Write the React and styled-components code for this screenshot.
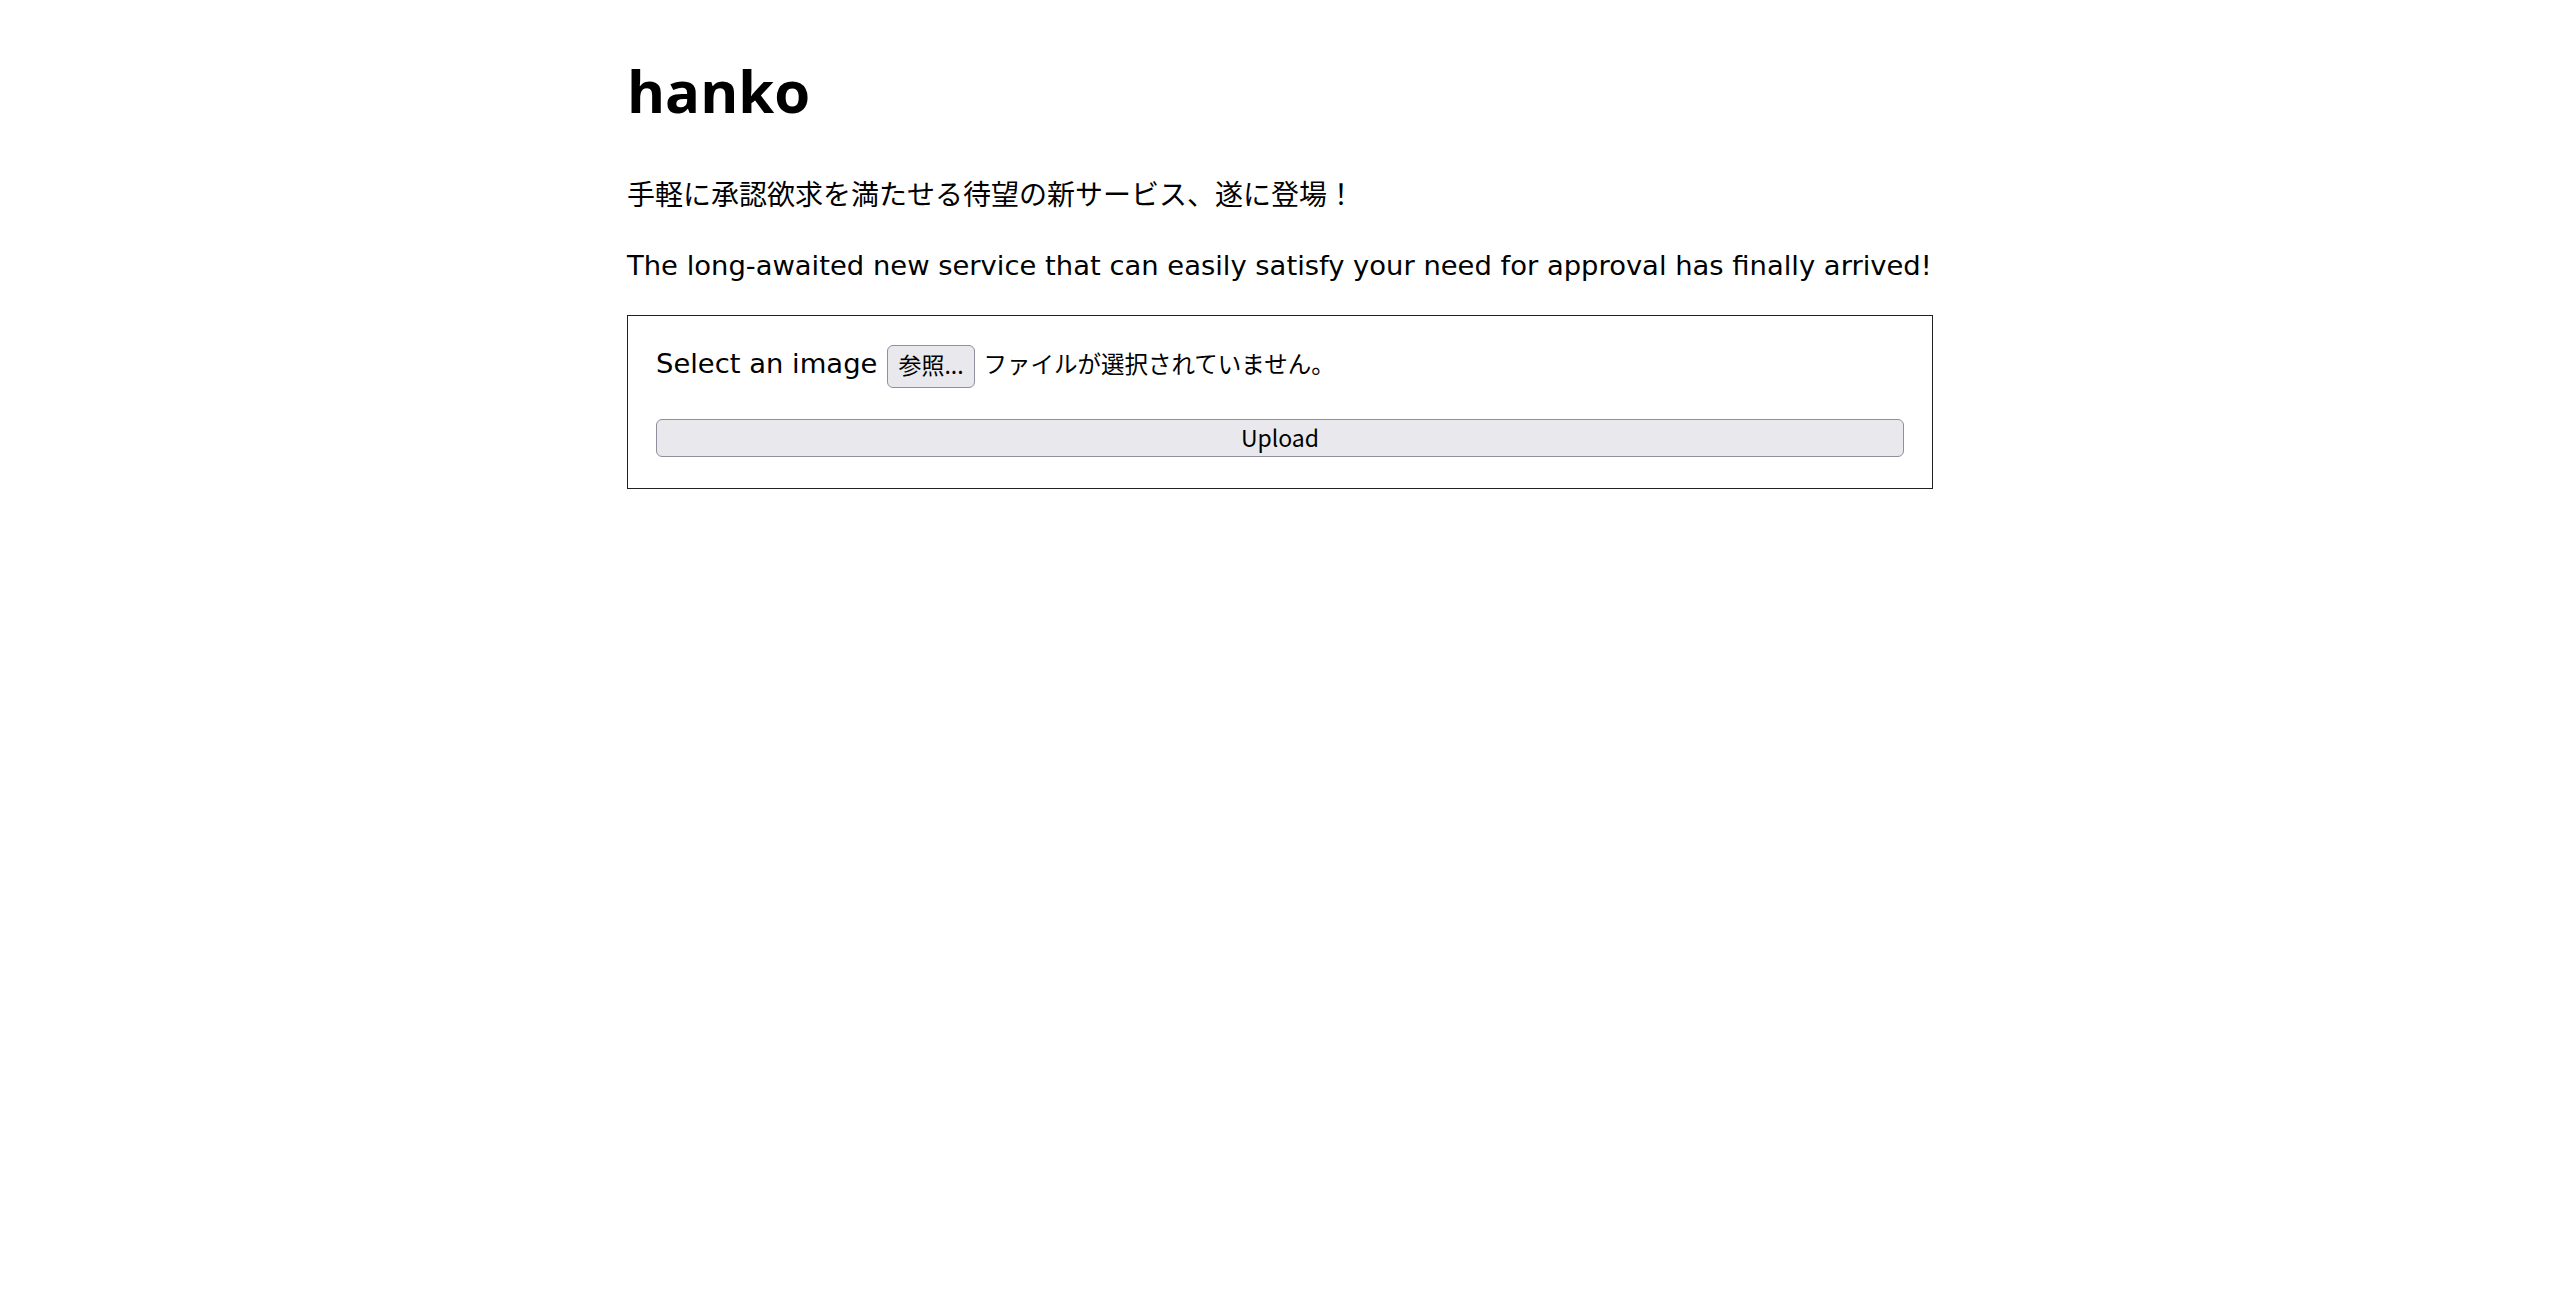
import React from 'react'
import styled, { createGlobalStyle } from 'styled-components'

const GlobalStyle = createGlobalStyle`
  html, body {
    margin: 0;
    padding: 0;
    background: #fff;
  }
  body {
    font-family: "DejaVu Sans", "Noto Sans CJK JP", sans-serif;
    color: #000;
  }
`

const Page = styled.main`
  box-sizing: border-box;
  width: 1306px;
  margin: 0 auto;
  padding-top: 62px;
`

const Title = styled.h1`
  margin: 0;
  font-family: "Open Sans", "Noto Sans CJK JP", sans-serif;
  font-weight: 700;
  font-size: 58px;
  line-height: 57px;
`

const Lead = styled.p`
  margin: ${(p) => p.$top}px 0 0;
  font-family: ${(p) => (p.$jp ? '"Noto Sans CJK JP", sans-serif' : '"DejaVu Sans", "Noto Sans CJK JP", sans-serif')};
  font-size: ${(p) => (p.$jp ? 28 : 27.4)}px;
  line-height: ${(p) => (p.$jp ? 40 : 36)}px;
  white-space: nowrap;
`

const Card = styled.form`
  box-sizing: border-box;
  margin-top: 31px;
  border: 1px solid #222;
  padding: 29px 28px 31px;
  display: flex;
  flex-direction: column;
  gap: 31px;
`

const PickRow = styled.label`
  display: flex;
  align-items: center;
  height: 43px;
`

const LabelText = styled.span`
  font-family: "DejaVu Sans", sans-serif;
  font-size: 27.4px;
  line-height: 36px;
  margin: 0 10px 5px 0;
`

const ControlButton = styled.button`
  box-sizing: border-box;
  height: ${(p) => (p.$wide ? 38 : 43)}px;
  width: ${(p) => (p.$wide ? '100%' : 'auto')};
  padding: 0 ${(p) => (p.$wide ? 0 : 10)}px ${(p) => (p.$wide ? 2 : 4)}px;
  background: #e9e9ed;
  border: 1px solid #8f8f9d;
  border-radius: 6px;
  color: #000;
  font-family: "Noto Sans CJK JP", sans-serif;
  font-size: 23px;
  line-height: 1;
  cursor: pointer;
`

const FileStatus = styled.span`
  margin: 0 0 5px 9px;
  font-family: "Noto Sans CJK JP", sans-serif;
  font-size: 23.5px;
  line-height: 1;
`

const App = () => {
  return (
    <>
      <GlobalStyle />
      <Page>
        <Title>hanko</Title>
        <Lead $jp $top={54}>手軽に承認欲求を満たせる待望の新サービス、遂に登場！</Lead>
        <Lead $top={35}>The long-awaited new service that can easily satisfy your need for approval has finally arrived!</Lead>
        <Card onSubmit={(e) => e.preventDefault()}>
          <PickRow>
            <LabelText>Select an image</LabelText>
            <ControlButton type="button">参照...</ControlButton>
            <FileStatus>ファイルが選択されていません。</FileStatus>
          </PickRow>
          <ControlButton $wide type="submit">Upload</ControlButton>
        </Card>
      </Page>
    </>
  )
}

export default App
